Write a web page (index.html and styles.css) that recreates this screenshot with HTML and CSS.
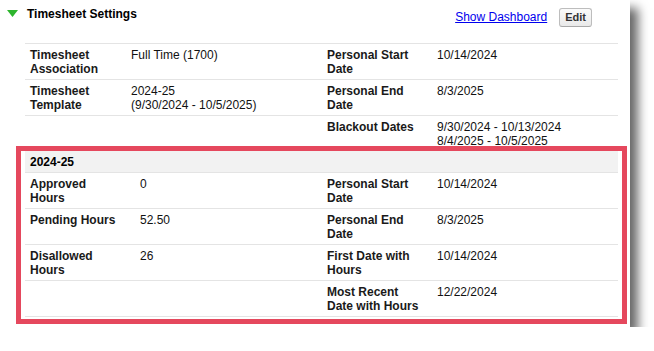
FILE: index.html
```html
<!DOCTYPE html>
<html lang="en">
<head>
    <meta charset="UTF-8">
    <title>Timesheet Settings</title>
    <link rel="stylesheet" href="styles.css">
</head>
<body>
    <div class="shot">
        <div class="head">
            <svg class="twist" width="11" height="7" viewBox="0 0 11 7"><polygon points="0,0 11,0 5.5,7" fill="#2db52d"/></svg>
            <h3 class="title">Timesheet Settings</h3>
            <a class="dash" href="#">Show Dashboard</a>
            <button class="btn">Edit</button>
        </div>

        <div class="detail">
            <div class="row">
                <div class="lbl">Timesheet Association</div>
                <div class="val">Full Time (1700)</div>
                <div class="lbl">Personal Start Date</div>
                <div class="val">10/14/2024</div>
            </div>
            <div class="row">
                <div class="lbl">Timesheet Template</div>
                <div class="val">2024-25<br>(9/30/2024 - 10/5/2025)</div>
                <div class="lbl">Personal End Date</div>
                <div class="val">8/3/2025</div>
            </div>
            <div class="row last">
                <div class="lbl"></div>
                <div class="val"></div>
                <div class="lbl">Blackout Dates</div>
                <div class="val">9/30/2024 - 10/13/2024<br>8/4/2025 - 10/5/2025</div>
            </div>
        </div>

        <div class="year">
            <div class="year-head">2024-25</div>
            <div class="row">
                <div class="lbl">Approved Hours</div>
                <div class="val">0</div>
                <div class="lbl">Personal Start Date</div>
                <div class="val">10/14/2024</div>
            </div>
            <div class="row">
                <div class="lbl">Pending Hours</div>
                <div class="val">52.50</div>
                <div class="lbl">Personal End Date</div>
                <div class="val">8/3/2025</div>
            </div>
            <div class="row">
                <div class="lbl">Disallowed Hours</div>
                <div class="val">26</div>
                <div class="lbl">First Date with Hours</div>
                <div class="val">10/14/2024</div>
            </div>
            <div class="row">
                <div class="lbl"></div>
                <div class="val"></div>
                <div class="lbl">Most Recent Date with Hours</div>
                <div class="val">12/22/2024</div>
            </div>
        </div>
    </div>
</body>
</html>
```

FILE: styles.css
```css
body {
    margin: 0;
    background-color: #fff;
    color: #000;
    font-family: "Liberation Sans", Arial, sans-serif;
    font-size: 12px;
}

.shot {
    width: 630px;
    height: 327px;
    background-color: #fff;
    box-shadow: 8px 8px 10px rgba(0, 0, 0, 0.6);
}

.head {
    display: flex;
    align-items: flex-start;
    height: 43px;
    padding: 0 38px 0 7px;
    box-sizing: border-box;
}

.twist {
    margin: 10px 9px 0 0;
}

.title {
    flex: 1;
    margin: 7px 0 0;
    font-size: 12px;
    line-height: 14px;
    font-weight: bold;
}

.dash {
    margin-top: 10px;
    line-height: 14px;
    color: #0000ee;
}

.btn {
    margin: 8px 0 0 12px;
    padding: 2px 5px;
    font-family: "Liberation Sans", Arial, sans-serif;
    font-size: 11px;
    font-weight: bold;
    line-height: 13px;
    color: #333;
    background: linear-gradient(#fbfbfb, #e9e9e9);
    border: 1px solid #bdbdbd;
    border-bottom-color: #a8a8a8;
    border-radius: 3px;
}

.detail {
    margin: 0 12px 0 25px;
    border-top: 1px solid #e4e4e4;
}

.row {
    display: grid;
    grid-template-columns: 101px 196px 110px 1fr;
    border-bottom: 1px solid #e4e4e4;
}

.row > div {
    padding: 4px 9px 3px 5px;
    line-height: 14px;
}

.row.last {
    border-bottom: none;
}

.row.last > div {
    padding-bottom: 0;
}

.lbl {
    font-weight: bold;
    color: #1a1a1a;
}

.val {
    color: #111;
}

.year {
    margin: -2px 3px 0 16px;
    padding: 0 4px 2px;
    border: 5px solid #e5485d;
}

.year .row {
    grid-template-columns: 110px 187px 110px 1fr;
}

.year .row > div:first-child {
    padding-right: 16px;
}

.year-head {
    padding: 4px 5px 3px;
    line-height: 14px;
    font-weight: bold;
    background-color: #f2f2f2;
    border-bottom: 1px solid #e4e4e4;
}
```
